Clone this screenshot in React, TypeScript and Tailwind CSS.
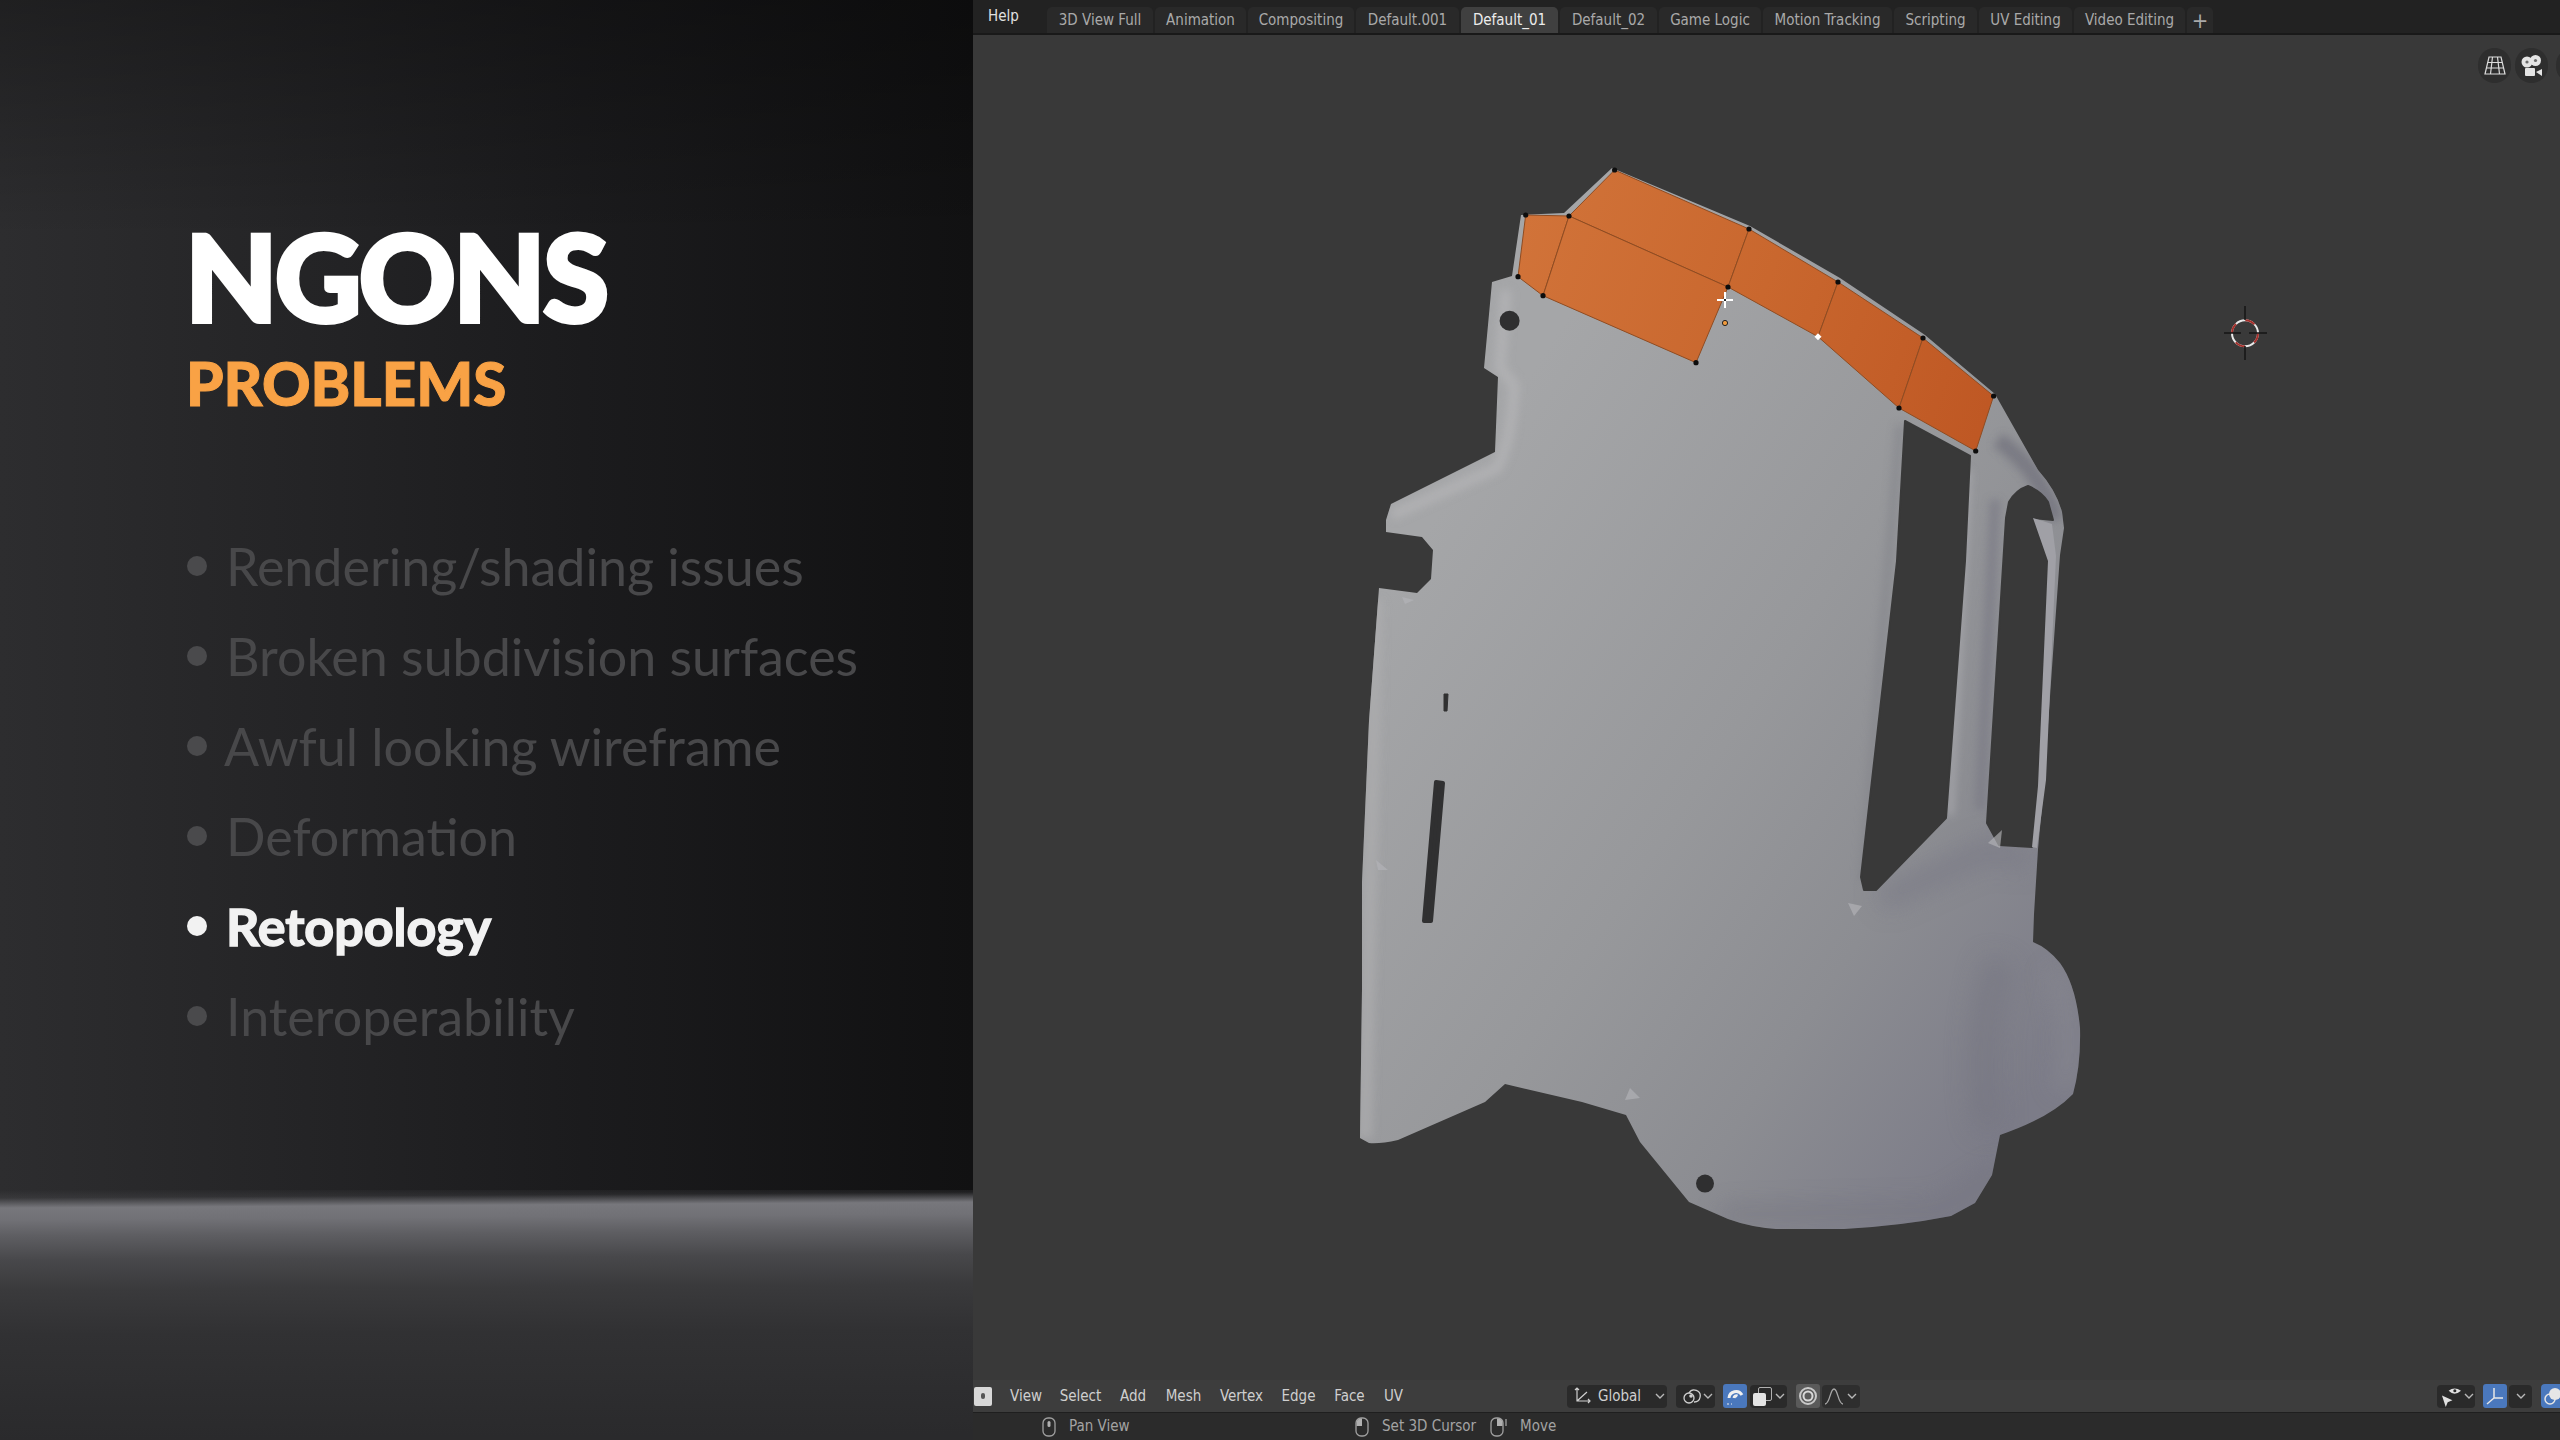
import React from "react";

const tabs = [
  { label: "3D View Full", cls: "w-[106px] bg-[#292929]" },
  { label: "Animation", cls: "w-[91px] bg-[#292929]" },
  { label: "Compositing", cls: "w-[106px] bg-[#292929]" },
  { label: "Default.001", cls: "w-[103px] bg-[#292929]" },
  { label: "Default_01", cls: "w-[97px] bg-[#404040] text-[#ececec]" },
  { label: "Default_02", cls: "w-[97px] bg-[#292929]" },
  { label: "Game Logic", cls: "w-[102px] bg-[#292929]" },
  { label: "Motion Tracking", cls: "w-[129px] bg-[#292929]" },
  { label: "Scripting", cls: "w-[83px] bg-[#292929]" },
  { label: "UV Editing", cls: "w-[93px] bg-[#292929]" },
  { label: "Video Editing", cls: "w-[111px] bg-[#292929]" },
];

const menus = [
  { label: "View", cls: "w-[50px]" },
  { label: "Select", cls: "w-[59px]" },
  { label: "Add", cls: "w-[46px]" },
  { label: "Mesh", cls: "w-[55px]" },
  { label: "Vertex", cls: "w-[61px]" },
  { label: "Edge", cls: "w-[53px]" },
  { label: "Face", cls: "w-[49px]" },
  { label: "UV", cls: "w-[39px]" },
];

const problems = [
  { label: "Rendering/shading issues", ml: "ml-[19px]" },
  { label: "Broken subdivision surfaces", ml: "ml-[19px]" },
  { label: "Awful looking wireframe", ml: "ml-[17px]" },
  { label: "Deformation", ml: "ml-[19px]" },
  { label: "Retopology", ml: "ml-[19px]", on: true },
  { label: "Interoperability", ml: "ml-[19px]" },
];

const verts = [
  [1614.6, 170], [1569, 216], [1525.7, 215], [1518, 276.7], [1543, 295.7], [1696, 362.7], [1728, 287],
  [1749, 229], [1838, 282], [1923, 338], [1899, 408], [1993.6, 396], [1975.7, 451],
];

function Chevron({ cls }: { cls?: string }) {
  return (
    <svg viewBox="0 0 10 6" className={`w-[10px] h-[6px] shrink-0 ${cls ?? ""}`} fill="none" stroke="#b8b8b8" strokeWidth="1.4">
      <path d="M1 1l4 4 4-4" />
    </svg>
  );
}

function MouseIcon({ side }: { side: "mid" | "left" | "right" }) {
  return (
    <svg viewBox="0 0 16 20" className="w-[16px] h-[20px] shrink-0 overflow-visible" fill="none" stroke="#a0a0a0" strokeWidth="1.3">
      <rect x="2" y="1" width="12" height="18" rx="5" />
      {side === "mid" && <rect x="6.5" y="4" width="3" height="6" rx="1.5" fill="#b0b0b0" stroke="none" />}
      {side === "left" && <path d="M8 1.5H6.5Q2.6 2 2.6 6v3H8z" fill="#b0b0b0" stroke="none" />}
      {side === "right" && <path d="M8 1.5h1.5q4 .5 4 4.5v3H8z" fill="#b0b0b0" stroke="none" />}
      {side === "right" && <path d="M17 2v7" />}
    </svg>
  );
}

function Mesh() {
  const outline =
    "M1521 215L1564 213L1612 168L1750 226L1840 278L1925 335L1995 394L2038 470Q2056 490 2062 512L2064 528L2060 555L2055 625L2043 796L2038 849L2034 914L2033 942Q2048 948 2060 963Q2076 985 2080 1028Q2081 1065 2073 1094Q2050 1118 2000 1135L1992 1175L1975 1203L1951 1216Q1900 1226 1844 1229L1776 1229Q1750 1227 1728 1219L1689 1202L1640 1142L1626 1115L1582 1102L1505 1084L1485 1102L1398 1140Q1380 1144 1369 1143L1360 1138L1362 989L1362 882L1369 721L1379 588L1417 593L1431 579L1433 550L1422 537L1386 532L1386 520L1391 504L1495 452L1498 377L1484 368L1492 282L1512 276Z";

  return (
    <svg viewBox="973 35 1587 1345" className="absolute inset-0 w-[1587px] h-[1345px]">
      <defs>
        <linearGradient id="body" gradientUnits="userSpaceOnUse" x1="1380" y1="600" x2="2060" y2="1050">
          <stop offset="0" stopColor="#a5a6a8" />
          <stop offset="0.45" stopColor="#97989b" />
          <stop offset="0.72" stopColor="#8c8d92" />
          <stop offset="1" stopColor="#7c7c88" />
        </linearGradient>
        <linearGradient id="orange" gradientUnits="userSpaceOnUse" x1="1520" y1="230" x2="1990" y2="400">
          <stop offset="0" stopColor="#d17339" />
          <stop offset="0.5" stopColor="#c9672e" />
          <stop offset="1" stopColor="#bf5824" />
        </linearGradient>
        <clipPath id="bodyClip">
          <path d={outline} />
        </clipPath>
        <filter id="soft4" filterUnits="userSpaceOnUse" x="973" y="35" width="1587" height="1345">
          <feGaussianBlur stdDeviation="4" />
        </filter>
        <filter id="soft12" filterUnits="userSpaceOnUse" x="973" y="35" width="1587" height="1345">
          <feGaussianBlur stdDeviation="12" />
        </filter>
      </defs>

      <path d={outline} fill="url(#body)" />

      <g clipPath="url(#bodyClip)" fill="none">
        <path d="M1392 515L1497 468Q1512 440 1514 385L1500 368L1506 290" stroke="#b4b4b6" strokeWidth="11" opacity="0.8" filter="url(#soft4)" />
        <path d="M1365 1138L1376 600" stroke="#adadaf" strokeWidth="14" opacity="0.7" filter="url(#soft4)" />
        <path d="M1968 470L1950 815" stroke="#aeaeb2" strokeWidth="6" opacity="0.8" filter="url(#soft4)" />
        <path d="M1995 500L1980 810" stroke="#7c7c86" strokeWidth="10" opacity="0.8" filter="url(#soft4)" />
        <path d="M1900 425L1862 880" stroke="#84858b" strokeWidth="8" opacity="0.7" filter="url(#soft4)" />
        <path d="M1998 440Q2040 470 2056 520" stroke="#74747f" strokeWidth="16" opacity="0.8" filter="url(#soft4)" />
        <path d="M1880 900L1990 850L2030 860" stroke="#7a7a86" strokeWidth="24" opacity="0.7" filter="url(#soft12)" />
        <path d="M2000 960Q1975 1040 1990 1130" stroke="#747480" strokeWidth="30" opacity="0.55" filter="url(#soft12)" />
        <path d="M2055 970Q2078 1030 2062 1090" stroke="#8a8a92" strokeWidth="18" opacity="0.7" filter="url(#soft12)" />
        <path d="M1720 1215L1940 1210L2005 1170" stroke="#74747f" strokeWidth="14" opacity="0.7" filter="url(#soft12)" />
      </g>

      {/* windows and slots */}
      <g fill="#393939" stroke="#393939" strokeWidth="2" strokeLinejoin="round">
        <path d="M1905 421L1970 456L1965 561L1946 818L1876 890L1864 890L1861 877L1897 561Z" />
        <path d="M2009 502Q2016 490 2028 486Q2042 492 2048 502L2053 520L2033 518L2048 561L2038 786L2032 847L1999 845L1987 823L2006 518Z" />
      </g>
      <g fill="#303031" stroke="#303031" strokeWidth="4" strokeLinejoin="round">
        <path d="M1436 782L1443 783L1431 921L1424 921Z" />
        <path d="M1444 694L1448 694L1447 711L1444 711Z" strokeWidth="1" />
      </g>
      <path d="M2033 518L2052 524L2056 556L2046 780L2037 848L2032 847L2038 786L2048 561Z" fill="#a0a0a6" />
      <circle cx="1509.6" cy="320.7" r="10" fill="#2f2f30" />
      <circle cx="1705" cy="1183.6" r="9" fill="#2f2f30" />

      {/* small creases */}
      <g fill="#b4b4b8" opacity="0.65">
        <path d="M1848 903L1862 906L1854 916Z" />
        <path d="M1625 1100L1630 1088L1640 1098Z" />
        <path d="M1376 860L1388 870L1378 870Z" />
        <path d="M1988 843L2002 830L2000 848Z" />
        <path d="M1402 597L1414 600L1405 604Z" />
      </g>

      {/* selected faces */}
      <g fill="url(#orange)" stroke="#8f4c22" strokeWidth="1">
        <path d="M1614.6 170L1749 229L1728 287L1569 216Z" />
        <path d="M1525.7 215L1569 216L1543 295.7L1518 276.7Z" />
        <path d="M1569 216L1728 287L1696 362.7L1543 295.7Z" />
        <path d="M1749 229L1838 282L1818 336.7L1728 287Z" />
        <path d="M1838 282L1923 338L1899 408L1818 336.7Z" />
        <path d="M1923 338L1993.6 396L1975.7 451L1899 408Z" />
      </g>

      {verts.map(([x, y]) => (
        <circle key={`${x}-${y}`} cx={x} cy={y} r="2.6" fill="#0d0d0d" />
      ))}
      <rect x="1815.5" y="334.2" width="5" height="5" transform="rotate(45 1818 336.7)" fill="#ffffff" />

      {/* mouse cursor and object origin */}
      <path d="M1725 292v16M1717 300h16" stroke="#ffffff" strokeWidth="2" />
      <path d="M1724 299h2v2h-2z" fill="#222222" />
      <circle cx="1725" cy="323" r="2.6" fill="#f09a3c" stroke="#222222" strokeWidth="1" />

      {/* 3D cursor */}
      <g fill="none">
        <circle cx="2245" cy="333.300" r="13" stroke="#e8e8e8" strokeWidth="2" />
        <circle cx="2245" cy="333.300" r="13" stroke="#a52f2b" strokeWidth="2" strokeDasharray="10.200 10.200" />
        <path d="M2245 306v14M2245 346v14M2224 333h17M2249 333h18" stroke="#151515" strokeWidth="1.500" />
      </g>
    </svg>
  );
}

export default function App() {
  return (
    <div className="flex w-[2560px] h-[1440px] overflow-hidden font-['Lato',sans-serif]">
      {/* Left: slide */}
      <div className="w-[973px] h-full shrink-0 flex flex-col bg-[linear-gradient(90deg,#2d2d2f_0%,#232325_35%,#1b1b1d_60%,#111112_100%)]">
        <div className="h-[1190px] pl-[185px] pt-[216px] bg-[linear-gradient(180deg,rgba(0,0,0,0.3)_0%,rgba(0,0,0,0)_20%)]">
          <h1 className="text-[120px] leading-[120px] font-black text-white tracking-[-3px] [-webkit-text-stroke:4px_white]">NGONS</h1>
          <h2 className="mt-[15px] ml-px text-[60px] leading-[64px] font-black text-[#f9a245] [-webkit-text-stroke:1px_#f9a245]">PROBLEMS</h2>
          <ul className="mt-[106px] ml-px">
            {problems.map((p) => (
              <li key={p.label} className="flex items-center h-[90px]">
                <span className={`ml-px w-[20px] h-[20px] rounded-full shrink-0 ${p.on ? "bg-[#f2f2f2]" : "bg-[#4a4a4c]"}`} />
                <span className={`${p.ml} text-[52px] leading-[64px] ${p.on ? "font-bold text-[#f2f2f2] [-webkit-text-stroke:1.5px_#f2f2f2]" : "text-[#48484a]"}`}>
                  {p.label}
                </span>
              </li>
            ))}
          </ul>
        </div>
        <div className="flex-1 bg-[linear-gradient(179.65deg,rgba(120,120,125,0)_0px,rgba(120,120,125,0.15)_8px,#77777c_18px,#717176_30px,#5e5e62_46px,#48484b_70px,#3a3a3c_100px,#313133_145px,#2a2a2c_250px)]" />
      </div>

      {/* Right: Blender */}
      <div className="w-[1587px] h-full flex flex-col bg-[#393939] font-['DejaVu_Sans_Condensed','DejaVu_Sans',sans-serif] text-[15px]">
        <div className="h-[35px] shrink-0 bg-[#222222] border-b-2 border-[#191919] flex items-end text-[#a9a9a9]">
          <div className="ml-[15px] w-[31px] self-start mt-[6px] leading-[20px] text-[#e0e0e0]">Help</div>
          <div className="ml-[28px] flex gap-[2px]">
            {tabs.map((t) => (
              <div key={t.label} className={`h-[26px] flex items-center justify-center rounded-t-[5px] ${t.cls}`}>
                {t.label}
              </div>
            ))}
            <div className="w-[26px] h-[26px] flex items-center justify-center rounded-t-[5px] bg-[#292929] text-[22px]">+</div>
          </div>
        </div>

        <div className="flex-1 relative overflow-hidden">
          <Mesh />
          <div className="absolute top-[13px] right-[12px] flex gap-1 items-center">
            <div className="w-[33px] h-[35px] rounded-full bg-[#2e2e2e] flex items-center justify-center">
              <svg viewBox="0 0 22 19" className="w-[22px] h-[19px]" fill="none" stroke="#dcdcdc" strokeWidth="1.2">
                <path d="M5 1h12l4 17H1zM8.500 1l-2 17M13.500 1l2 17M3.800 6.500h14.400M2.400 12h17.200" />
              </svg>
            </div>
            <div className="w-[33px] h-[35px] rounded-full bg-[#2e2e2e] flex items-center justify-center">
              <svg viewBox="0 0 21 22" className="w-[21px] h-[22px]" fill="#e4e4e4">
                <circle cx="6" cy="7" r="5.500" />
                <circle cx="14.500" cy="5.500" r="5.500" />
                <circle cx="6" cy="7" r="1.600" fill="#6a6a6a" />
                <circle cx="14.500" cy="5.500" r="1.600" fill="#6a6a6a" />
                <rect x="4" y="13" width="10" height="8" rx="1" />
                <path d="M15 17l6-3v7z" />
              </svg>
            </div>
          </div>
          <div className="absolute top-[13px] left-[1583px] w-[33px] h-[35px] rounded-full bg-[#2e2e2e]" />
        </div>

        {/* Bottom header */}
        <div className="h-[33px] shrink-0 bg-[#3d3d3d] border-b border-[#1f1f1f] flex items-center text-[#cfcfcf]">
          <div className="ml-px w-[18px] h-[19px] bg-[#d8d8d8] rounded-[2px] flex items-center justify-center shrink-0">
            <span className="w-[4px] h-[6px] rounded-full bg-[#555555]" />
          </div>
          <div className="ml-[9px] flex shrink-0">
            {menus.map((m) => (
              <div key={m.label} className={`text-center ${m.cls}`}>{m.label}</div>
            ))}
          </div>

          <div className="ml-[154px] w-[100px] h-[23px] rounded-[4px] bg-[#2a2a2a] flex items-center shrink-0">
            <svg viewBox="0 0 18 18" className="ml-[6px] w-[18px] h-[18px] shrink-0" fill="none" stroke="#d0d0d0" strokeWidth="1.2">
              <path d="M4 1v13h13M4 14L14 5M2 3l2-2 2 2M15 12l2 2-2 2" />
            </svg>
            <span className="ml-[7px]">Global</span>
            <Chevron cls="ml-auto mr-[2px]" />
          </div>

          <div className="ml-[9px] w-[39px] h-[23px] rounded-[4px] bg-[#2a2a2a] flex items-center shrink-0">
            <svg viewBox="0 0 20 20" className="ml-[5px] w-[20px] h-[20px] shrink-0" fill="none" stroke="#d0d0d0" strokeWidth="1.3">
              <circle cx="8" cy="12" r="5" />
              <path d="M8 7a6 6 0 1 1 5 9" />
              <circle cx="10" cy="10" r="1.800" fill="#d0d0d0" stroke="none" />
            </svg>
            <Chevron cls="ml-[2px]" />
          </div>

          <div className="ml-[8px] w-[24px] h-[24px] rounded-[3px] bg-[#4a78bd] flex items-center justify-center shrink-0">
            <svg viewBox="0 0 20 20" className="w-[20px] h-[20px]" fill="none" stroke="#f0f0f0" strokeWidth="3">
              <path d="M4 12a7 7 0 0 1 13-3M9 12a2.500 2.500 0 0 1 3.500-2" />
              <path d="M2 18h2M6 18h1" strokeWidth="1.200" />
            </svg>
          </div>

          <div className="ml-[3px] w-[37px] h-[23px] rounded-[4px] bg-[#2a2a2a] flex items-center shrink-0">
            <div className="ml-[3px] w-[19px] h-[19px] relative shrink-0">
              <span className="absolute top-0 right-0 w-[14px] h-[14px] border border-[#b0b0b0] rounded-[2px]" />
              <span className="absolute bottom-0 left-0 w-[13px] h-[13px] bg-[#e4e4e4] rounded-[2px]" />
            </div>
            <Chevron cls="ml-[3px]" />
          </div>

          <div className="ml-[9px] w-[24px] h-[24px] rounded-[3px] bg-[#5a5a5a] flex items-center justify-center shrink-0">
            <svg viewBox="0 0 20 20" className="w-[20px] h-[20px]" fill="none">
              <circle cx="10" cy="10" r="8" stroke="#c8c8c8" strokeWidth="2" />
              <circle cx="10" cy="10" r="4.500" stroke="#d8d8d8" strokeWidth="2" />
            </svg>
          </div>

          <div className="ml-[2px] w-[38px] h-[23px] rounded-[4px] bg-[#2e2e2e] flex items-center shrink-0">
            <svg viewBox="0 0 20 18" className="ml-[2px] w-[20px] h-[18px] shrink-0" fill="none" stroke="#a8a8a8" strokeWidth="1.3">
              <path d="M1 17c5 0 5-15 9-15s4 15 9 15" />
            </svg>
            <Chevron cls="ml-[3px]" />
          </div>

          <div className="ml-[577px] w-[38px] h-[23px] rounded-[4px] bg-[#2a2a2a] flex items-center shrink-0">
            <svg viewBox="0 0 24 22" className="ml-[3px] w-[23px] h-[21px] shrink-0" fill="#e0e0e0">
              <path d="M2 10l11 5-5 2-2 5z" />
              <path d="M9 5q6-5 13 0q-7 6-13 0z" />
              <circle cx="15.500" cy="5" r="1.600" fill="#2a2a2a" />
            </svg>
            <Chevron cls="ml-[1px]" />
          </div>

          <div className="ml-[8px] w-[24px] h-[24px] rounded-[3px] bg-[#4a78bd] flex items-center justify-center shrink-0">
            <svg viewBox="0 0 20 20" className="w-[20px] h-[20px]" fill="none" stroke="#e6e6e6" strokeWidth="1.500">
              <path d="M9 2v10l9 0M9 12l-7 6" />
            </svg>
          </div>

          <div className="ml-[2px] w-[23px] h-[23px] rounded-[4px] bg-[#2a2a2a] flex items-center justify-center shrink-0">
            <Chevron />
          </div>

          <div className="ml-[9px] w-[24px] h-[24px] rounded-l-[4px] bg-[#4a78bd] flex items-center justify-center shrink-0">
            <svg viewBox="0 0 20 20" className="w-[20px] h-[20px]" fill="none">
              <circle cx="12" cy="8" r="6" fill="#e6e6e6" />
              <circle cx="7" cy="13" r="5" stroke="#e6e6e6" strokeWidth="1.500" />
            </svg>
          </div>
        </div>

        {/* Status bar */}
        <div className="h-[27px] shrink-0 bg-[#2b2b2b] flex items-center text-[#a3a3a3]">
          <div className="ml-[68px] shrink-0"><MouseIcon side="mid" /></div>
          <span className="ml-[12px] w-[285px] shrink-0">Pan View</span>
          <MouseIcon side="left" />
          <span className="ml-[12px] w-[92px] shrink-0 whitespace-nowrap">Set 3D Cursor</span>
          <div className="ml-[15px] shrink-0"><MouseIcon side="right" /></div>
          <span className="ml-[15px] shrink-0">Move</span>
        </div>
      </div>
    </div>
  );
}
